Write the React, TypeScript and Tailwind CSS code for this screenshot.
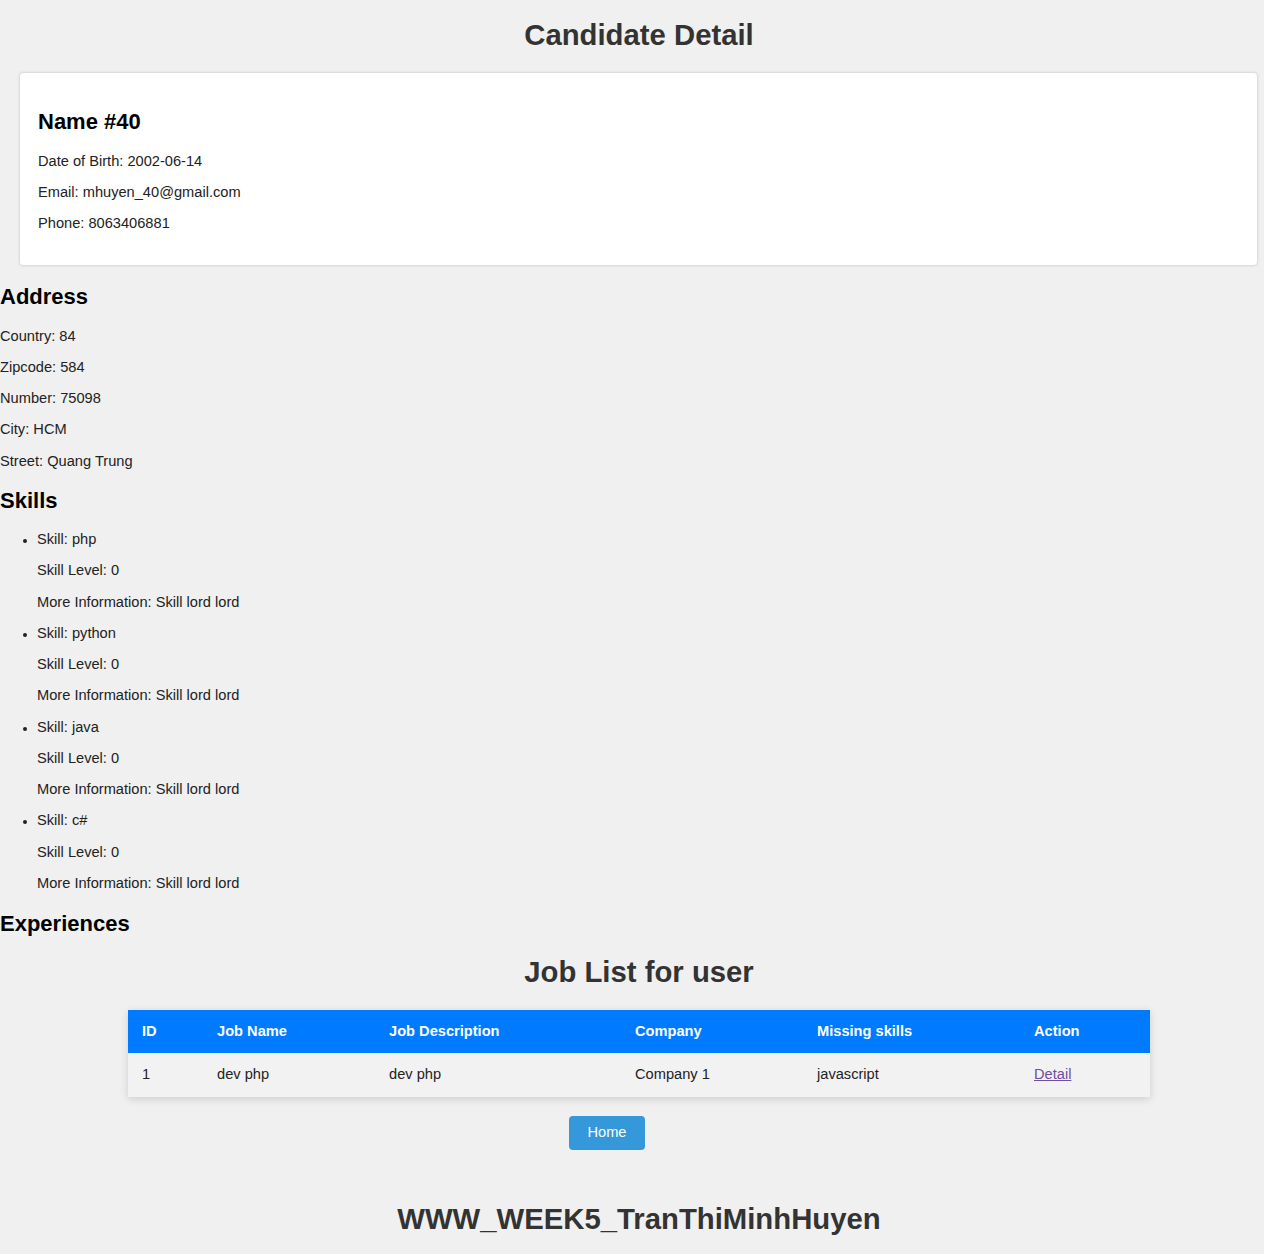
const candidate = {
  name: 'Name #40',
  dob: '2002-06-14',
  email: 'mhuyen_40@gmail.com',
  phone: '8063406881',
};

const address = [
  ['Country', '84'],
  ['Zipcode', '584'],
  ['Number', '75098'],
  ['City', 'HCM'],
  ['Street', 'Quang Trung'],
];

const skills = ['php', 'python', 'java', 'c#'];

const columns = [
  { title: 'ID', width: 'w-[75px]' },
  { title: 'Job Name', width: 'w-[172px]' },
  { title: 'Job Description', width: 'w-[246px]' },
  { title: 'Company', width: 'w-[182px]' },
  { title: 'Missing skills', width: 'w-[217px]' },
  { title: 'Action', width: 'w-[130px]' },
];

const jobs = [
  { id: 1, name: 'dev php', description: 'dev php', company: 'Company 1', missing: 'javascript' },
];

const App = () => {
  return (
    <div className="min-h-[1254px] bg-[#f0f0f0] text-[14.64px] leading-[17px] text-[#222] font-['Liberation_Sans',Arial,sans-serif]">
      <h1 className="pt-[18px] pl-[14px] text-center text-[29.3px] leading-[34px] font-bold text-[#333]">
        Candidate Detail
      </h1>

      <div className="mt-[20px] ml-[19px] mr-[6px] rounded-[4px] border border-[#dddddd] bg-white pt-[36px] pb-[33px] px-[18px] shadow-[0_0_3px_rgba(0,0,0,0.08)]">
        <h2 className="text-[22px] leading-[26px] font-bold text-black">{candidate.name}</h2>
        <div className="mt-[18px] flex flex-col gap-[14px]">
          <p>Date of Birth: {candidate.dob}</p>
          <p>Email: {candidate.email}</p>
          <p>Phone: {candidate.phone}</p>
        </div>
      </div>

      <h2 className="mt-[18px] text-[22px] leading-[26px] font-bold text-black">Address</h2>
      <div className="mt-[17.5px] flex flex-col gap-[14.25px]">
        {address.map(([label, value]) => (
          <p key={label}>
            {label}: {value}
          </p>
        ))}
      </div>

      <h2 className="mt-[18px] text-[22px] leading-[26px] font-bold text-black">Skills</h2>
      <ul className="mt-[17.5px] flex flex-col gap-[14.27px] pl-[37px] list-disc">
        {skills.map((skill) => (
          <li key={skill} className="flex flex-col gap-[14.27px] marker:text-[12px]">
            <p className="list-item list-disc">Skill: {skill}</p>
            <p>Skill Level: 0</p>
            <p>More Information: Skill lord lord</p>
          </li>
        ))}
      </ul>

      <h2 className="mt-[19px] text-[22px] leading-[26px] font-bold text-black">Experiences</h2>

      <h2 className="mt-[18px] pl-[14px] text-center text-[29.3px] leading-[34px] font-bold text-[#333]">
        Job List for user
      </h2>

      <div className="mt-[21px] ml-[128px] w-[1022px] shadow-[0_2px_8px_rgba(0,0,0,0.15)]">
        <table className="w-full border-collapse text-left">
          <thead>
            <tr className="bg-[#007bff] text-white">
              {columns.map((col) => (
                <th key={col.title} className={`${col.width} h-[43px] px-[14px] font-bold`}>
                  {col.title}
                </th>
              ))}
            </tr>
          </thead>
          <tbody>
            {jobs.map((job) => (
              <tr key={job.id} className="bg-[#f2f2f2]">
                <td className="h-[44px] px-[14px]">{job.id}</td>
                <td className="px-[14px]">{job.name}</td>
                <td className="px-[14px]">{job.description}</td>
                <td className="px-[14px]">{job.company}</td>
                <td className="px-[14px]">{job.missing}</td>
                <td className="px-[14px]">
                  <a href="#" className="text-[#6f4ea0] underline">
                    Detail
                  </a>
                </td>
              </tr>
            ))}
          </tbody>
        </table>
      </div>

      <div className="mt-[19px] flex justify-center">
        <button
          type="button"
          className="ml-[-50px] h-[34px] w-[76px] rounded-[4px] bg-[#3498db] text-[14.64px] text-white"
        >
          Home
        </button>
      </div>

      <h2 className="mt-[52px] pb-[18px] pl-[14px] text-center text-[29.3px] leading-[34px] font-bold text-[#333]">
        WWW_WEEK5_TranThiMinhHuyen
      </h2>
    </div>
  );
};

export default App;
